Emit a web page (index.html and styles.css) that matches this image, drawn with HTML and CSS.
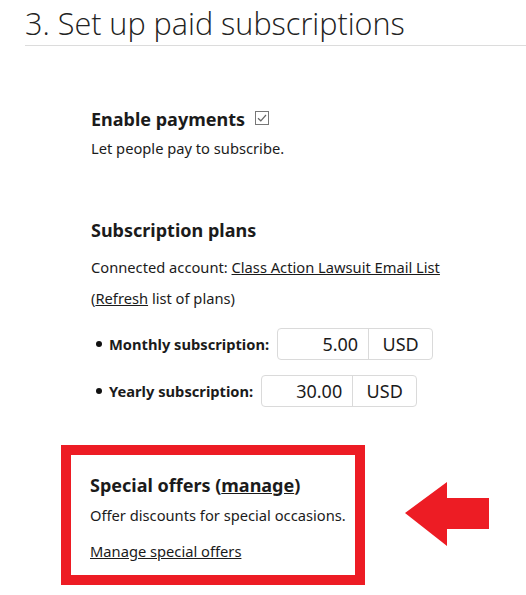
FILE: index.html
```html
<!DOCTYPE html>
<html>
<head>
<meta charset="utf-8">
<link rel="stylesheet" href="styles.css">
</head>
<body>
<div class="page">
  <h1 class="title">3. Set up paid subscriptions</h1>
  <div class="content">
    <section class="block enable">
      <h2 class="block-title">Enable payments <span class="check"><svg width="14" height="14" viewBox="0 0 14 14"><rect x="0.5" y="0.5" width="13" height="13" fill="#fff" stroke="#777"/><path d="M3 7.2 L5.8 9.8 L11 4" fill="none" stroke="#666" stroke-width="1.2"/></svg></span></h2>
      <p class="desc">Let people pay to subscribe.</p>
    </section>
    <section class="block plans">
      <h2 class="block-title">Subscription plans</h2>
      <p class="line first">Connected account: <a href="#">Class Action Lawsuit Email List</a></p>
      <p class="line">(<a href="#">Refresh</a> list of plans)</p>
      <ul class="plan-list">
        <li class="plan"><span class="plan-label">Monthly subscription:</span><span class="price"><span class="amount">5.00</span><span class="cur">USD</span></span></li>
        <li class="plan"><span class="plan-label">Yearly subscription:</span><span class="price"><span class="amount">30.00</span><span class="cur">USD</span></span></li>
      </ul>
    </section>
    <div class="offers-row">
      <section class="offers">
        <h2 class="block-title">Special offers (<a href="#">manage</a>)</h2>
        <p class="desc offers-desc">Offer discounts for special occasions.</p>
        <p class="manage"><a href="#">Manage special offers</a></p>
      </section>
      <svg class="arrow" width="86" height="66" viewBox="0 0 86 66"><polygon points="0,31 42,0 42,16 84,16 84,47 42,47 42,64" fill="#ed1c24"/></svg>
    </div>
  </div>
</div>
</body>
</html>
```
FILE: styles.css
```css
html, body { margin: 0; padding: 0; background: #fff; }
body { font-family: "Noto Sans", "Open Sans", sans-serif; color: #1b1b1b; }
.page { padding-left: 25px; }
.title {
  margin: 0;
  font-family: "Open Sans", "Noto Sans", sans-serif;
  font-weight: 300;
  font-size: 30.6px;
  line-height: 46px;
  height: 45px;
  border-bottom: 1px solid #dcdcdc;
  color: #222;
}
.content { padding-left: 66px; }
.block-title { margin: 0; font-size: 18px; font-weight: 700; line-height: 24px; }
.block-title a { color: inherit; }
.check { display: inline-block; margin-left: 5px; vertical-align: 1px; }
.check svg { display: block; }
.desc { margin: 7px 0 0; font-size: 14.7px; line-height: 20px; }
.enable { padding-top: 61px; }
.plans { padding-top: 60px; }
.line { margin: 8px 0 0; font-size: 14.7px; line-height: 23px; }
.line.first { margin-top: 14px; }
a { color: #1b1b1b; }
.plan-list { margin: 18px 0 0; padding: 0 0 0 18px; }
.plan { font-size: 14.7px; font-weight: 700; display: flex; align-items: center; margin-bottom: 15px; }
.plan::before { content: ""; width: 6px; height: 6px; border-radius: 50%; background: #111; margin-left: -13px; margin-right: 7px; }
.plan-label { margin-right: 8px; }
.price { display: flex; border: 1px solid #dadada; border-radius: 4px; height: 30px; font-weight: 400; font-size: 18px; }
.amount { width: 80px; text-align: right; padding-right: 10px; line-height: 30px; border-right: 1px solid #dadada; }
.cur { width: 63px; text-align: center; line-height: 30px; }
.offers-row { display: flex; align-items: center; margin-top: 38px; margin-left: -30px; }
.offers { border: 10px solid #ed1c24; width: 265px; padding: 18px 0 14px 19px; }
.offers-desc { margin-top: 8px; }
.arrow { margin-left: 40px; }
.manage { margin: 16px 0 0; font-size: 14.7px; line-height: 20px; }
```
